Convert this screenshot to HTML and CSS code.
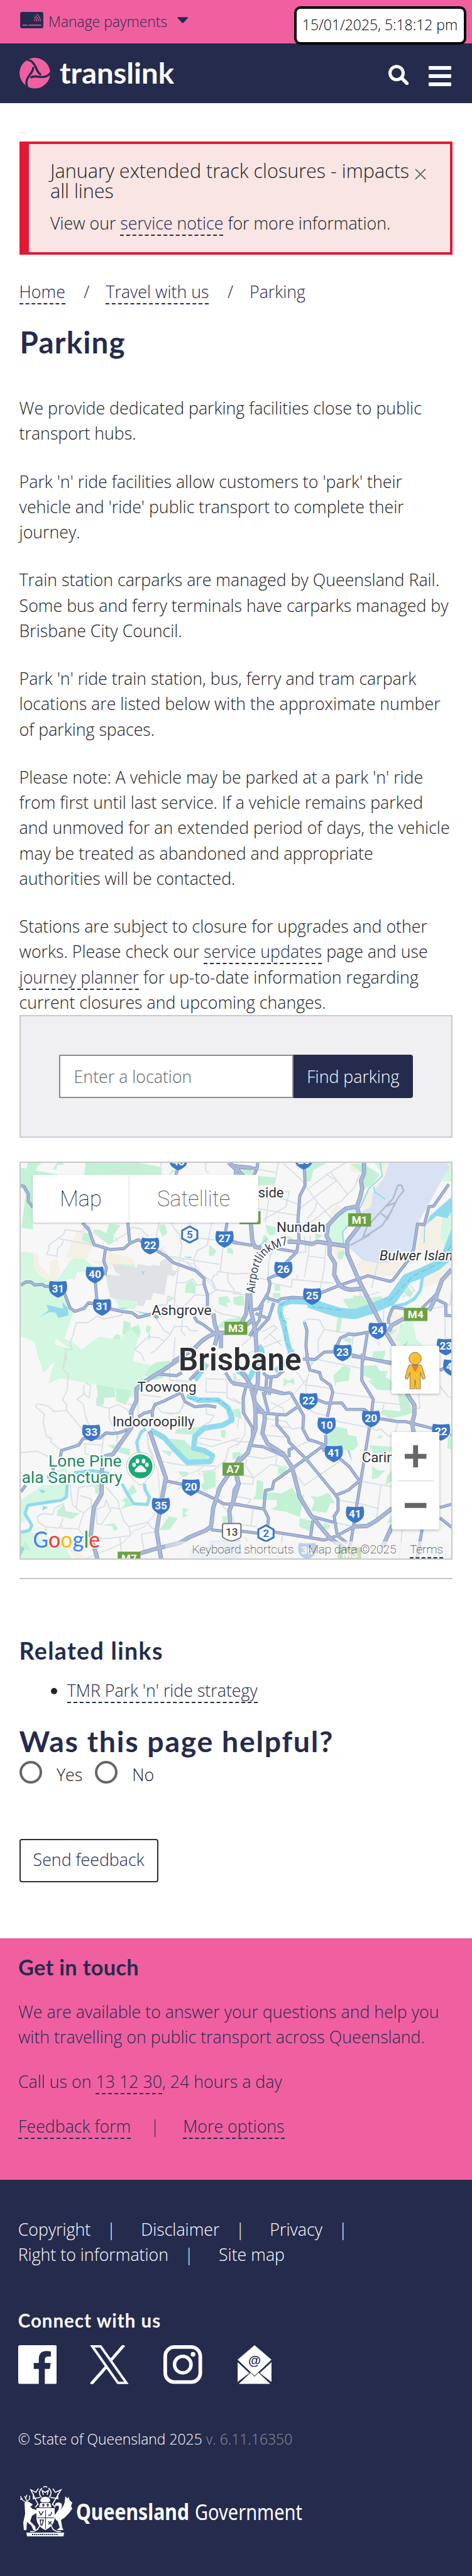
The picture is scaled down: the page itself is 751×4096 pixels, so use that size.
FILE: index.html
```html
<!DOCTYPE html>
<html lang="en">
<head>
<meta charset="utf-8">
<title>Parking | Translink</title>
<link rel="stylesheet" href="styles.css">
</head>
<body>
<div class="topbar">
  <a class="payments">
    <svg class="card-icon" viewBox="0 0 58 41"><rect width="58" height="41" rx="5" fill="#252b4d"/><path d="M6 33h12M21 33h32" stroke="#f060a1" stroke-width="2.4"/><path d="M35 19q2 2 3 4.500M35 13q6 4 7 10.500M37.500 9.500q8 4.500 9 14M41 6q9 5 10 17.500" fill="none" stroke="#f060a1" stroke-width="1.700"/></svg>
    <span>Manage payments</span>
    <svg class="caret" viewBox="0 0 18 10"><path d="M1.500 0h15q2 0 .8 1.700l-6.800 7.500q-1.500 1.300-3 0L.7 1.700Q-.5 0 1.500 0Z" fill="#252b4d"/></svg>
  </a>
  <div class="clock">15/01/2025, 5:18:12 pm</div>
</div>
<header class="header">
  <svg class="logo" viewBox="0 0 250 52">
    <defs><clipPath id="disc"><circle cx="24.500" cy="25.300" r="24.500"/></clipPath></defs>
    <g clip-path="url(#disc)"><circle cx="24.500" cy="25.300" r="24.500" fill="#f060a1"/>
      <g fill="none" stroke="#252b4d" stroke-width="3.400">
        <path id="gap" d="M52 21.500C46 32 38 32 30 31C24 30 21 30 17.500 32.500"/>
        <use href="#gap" transform="rotate(120 24.500 25.300)"/><use href="#gap" transform="rotate(240 24.500 25.300)"/>
      </g></g>
    <text x="64" y="42.300" class="wordmark" textLength="182" lengthAdjust="spacingAndGlyphs">translink</text>
  </svg>
  <div class="header-actions">
    <svg class="search-icon" viewBox="0 0 32 32"><circle cx="13" cy="13.200" r="10.500" fill="none" stroke="#fff" stroke-width="5"/><path d="M21 21l8.500 8.500" stroke="#fff" stroke-width="5.500" stroke-linecap="round"/></svg>
    <div class="menu"><i></i><i></i><i></i></div>
  </div>
</header>

<main class="main">
  <section class="alert">
    <div class="alert-body">
      <h2 class="alert-title">January extended track closures - impacts all lines</h2>
      <p class="alert-text">View our <a class="link">service notice</a> for more information.</p>
    </div>
    <svg class="close" viewBox="0 0 18 20"><path d="M1 4l16 16M17 4L1 20" stroke="#fff" stroke-width="1.800"/><path d="M1 1l16 16M17 1L1 17" stroke="#6a6567" stroke-width="1.800"/></svg>
  </section>

  <nav class="crumbs"><a class="link">Home</a><span class="sep">/</span><a class="link">Travel with us</a><span class="sep">/</span><span>Parking</span></nav>
  <h1 class="title">Parking</h1>

  <div class="copy">
    <p>We provide dedicated parking facilities close to public<br>transport hubs.</p>
    <p>Park 'n' ride facilities allow customers to 'park' their<br>vehicle and 'ride' public transport to complete their<br>journey.</p>
    <p>Train station carparks are managed by Queensland Rail.<br>Some bus and ferry terminals have carparks managed by<br>Brisbane City Council.</p>
    <p>Park 'n' ride train station, bus, ferry and tram carpark<br>locations are listed below with the approximate number<br>of parking spaces.</p>
    <p>Please note: A vehicle may be parked at a park 'n' ride<br>from first until last service. If a vehicle remains parked<br>and unmoved for an extended period of days, the vehicle<br>may be treated as abandoned and appropriate<br>authorities will be contacted.</p>
    <p>Stations are subject to closure for upgrades and other<br>works. Please check our <a class="link">service updates</a> page and use<br><a class="link">journey planner</a> for up-to-date information regarding<br>current closures and upcoming changes.</p>
  </div>

  <form class="finder"><span class="field">Enter a location</span><span class="find">Find parking</span></form>

  <div class="map">
    <svg class="map-art" viewBox="50.800 2904 1077 988" preserveAspectRatio="none">
      <defs>
        <path id="sh" d="M-20-1Q0 2 20-1Q24 8 22 22Q18 34 0 41Q-18 34-22 22Q-24 8-20-1Z" fill="#3a77c8"/>
        <path id="hex" d="M0-20L19-10V10L0 20L-19 10V-10Z" fill="#fff" stroke="#3a77c8" stroke-width="3"/>
        <g id="major">
          <g transform="translate(0 2880) scale(.38265 .33333)">
            <path d="M1490 70L1540 120 1536 165M1545 100L1640 110M1540 110L1600 190"/>
            <path d="M1640 1250C1560 1350 1500 1350 1420 1345C1340 1370 1300 1420 1265 1465L1125 1565"/>
            <path d="M1390 1200L1400 1280 1420 1345 1400 1440M1440 1350V1460"/>
          </g>
          <g transform="translate(580 2880) scale(.38202 .33333)">
            <path d="M860 70V150L840 205L848 265L832 340L815 395L825 450V550L750 660V750L830 960L980 1300L1060 1450"/>
            <path d="M815 400L740 415 690 460 625 540 615 620 635 660V760L670 825L665 910L700 990Q730 1020 780 1022L845 1015M360 663L440 665L520 680L555 663L750 697M120 530L130 660L150 705L190 708"/>
            <path d="M1285 1180L1330 1080L1370 950L1434 870M1120 1240L1040 1290L1020 1335M115 1050L120 1170L150 1340L162 1570M100 1050L90 1200L60 1270"/>
          </g>
          <g transform="translate(0 3380) scale(.38265 .3699)">
            <path d="M1180 30L1060 115L950 185L888 240V320L855 390V500L795 590L735 680L665 700L660 950L610 1040L590 1230L635 1390"/>
            <path d="M1568 700L1435 900L1390 1040L1375 1170L1340 1195L1235 1240L1170 1280L1010 1320L915 1350M1540 830L1555 880L1530 920L1520 1000L1495 1060L1500 1145M975 525L1080 840L1055 980L1020 1200L1050 1390"/>
          </g>
          <g transform="translate(580 3380) scale(.38202 .3699)">
            <path d="M60 120L120 220L145 330L210 410V450L195 540L230 610L330 675L390 770L440 970L510 1090L640 1250L740 1320"/>
            <path d="M168 110L165 200L140 290L150 380V510L100 670L15 760L40 880L5 1000M1140 270L1190 350V410L1175 470L1185 540M790 1170L880 1165L940 1130L1045 1045M1045 1160L980 1310M0 200L90 215L330 270"/>
          </g>
        </g>
        <g id="arterial">
          <g transform="translate(0 2880) scale(.38265 .33333)">
            <path d="M133 240L155 250L182 305V360L212 405M535 520L580 580L612 685L720 722L805 715L845 675L900 648L1080 770L1130 820L1275 880L1330 940V985L1352 1060V1150M832 520L845 675M685 722L675 810L692 860L682 915M1155 125L1145 165M1480 520L1468 600M1510 660L1580 680M133 990L165 965H200L222 987L275 983L290 997H330M415 1040L455 1160L487 1185L547 1162L575 1120L620 1130M620 970L630 1100M715 1165L790 1185L860 1195L900 1230L990 1205L1030 1235M1265 1225L1285 1260L1320 1280L1400 1350"/>
          </g>
          <g transform="translate(580 2880) scale(.38202 .33333)">
            <path d="M0 90L160 115L165 72M160 115L140 165M470 120L475 240L440 320L428 500L435 640L420 740L345 825M0 668L130 690M290 715L420 740M330 910L280 915L235 938L245 980L235 1040L215 1080L170 1165L130 1175M215 1080L295 1110L320 1090L390 1080L470 1085M570 1050L700 990L885 918L1030 960L1050 950L1150 800L1185 720L1210 530L1255 535L1285 400L1315 397L1415 232"/>
            <path d="M270 1120L235 1240L130 1370M195 1130L175 1250L110 1370M150 1200L235 1240M470 1265L487 1330L480 1440L490 1540L540 1545L600 1490L665 1488L705 1385L760 1355L800 1360L890 1340M882 1350L852 1560M780 1520L1040 1568M1120 1165L1060 1155L1045 1165L1020 1240V1280M1240 1160L1330 1060M1335 1095L1395 1130V1215L1434 1218"/>
          </g>
          <g transform="translate(0 3380) scale(.38265 .3699)">
            <path d="M1035 140L1150 150L1185 130M1310 100L1235 180M900 430L935 405L990 390L1010 345L1060 325L1180 265L1205 325L1270 360L1350 352L1410 362M992 390V430M830 510Q780 550 690 537L650 570L540 575L510 620L400 655L390 700M305 835L350 830L340 750M133 935L165 890M1080 860L1190 885M1290 930L1415 990L1460 1015L1568 1022M1375 1190L1450 1200M1470 130L1510 195L1568 210"/>
          </g>
          <g transform="translate(580 3380) scale(.38202 .3699)">
            <path d="M90 215L70 300V400L130 500V570M460 40L485 35L505 110L570 130L580 170L640 215L655 260L620 430M610 550V610L480 710L270 865L260 915L215 925L205 1050L235 1110L230 1170M485 40L490 0M550 310L610 335H715L745 377L860 378L885 395M960 440L1080 460H1130L1305 505M1425 550H1434M850 0L845 180L920 310L910 395M895 500L790 1170L770 1300M150 390L220 405L350 415L440 350M380 265L465 420L460 510L495 580L585 610L600 665M380 265L330 272L240 240L170 235M200 260L235 400M225 140L215 280M255 150L240 280M200 130L230 160L290 155L335 115M290 410V480L365 570L370 600L480 710L670 950L690 980V1060L665 1100L685 1230M110 620L200 630L330 690M395 640L370 650V700M700 710L760 760L830 860L755 925L680 955M0 1015L205 1050M515 1100L660 1140M525 1130L510 1240M60 1200L170 1215M270 1205L600 1260L685 1230L790 1170M685 1230L750 1280M780 10L1040 70M1356 1040L1434 1018M1356 1110L1434 1175M1240 1190L1205 1390M1356 115L1390 95"/>
          </g>
        </g>
        <path id="link-m7" d="M635 3230C640 3180 645 3150 668 3130Q690 3113 726 3107"/>
      </defs>
      <rect x="40" y="2890" width="1100" height="1010" fill="#f7f7f7"/>

      <g transform="translate(0 2880) scale(.38265 .33333)">
        <path class="park" d="M179 72H268L240 100 232 130 356 155 400 165 212 162V570L138 558 165 310 133 240V110L172 114ZM370 72H412L410 88 372 85 365 126 340 118ZM557 72H895L1040 100 1048 165H545ZM1130 120L1145 130 1105 165 1110 140ZM710 528L785 538 740 610V655L705 682 660 630 600 575 640 570 690 600ZM540 595L585 600 610 685 530 655ZM1040 535H1075L1090 600 1060 625 1035 570ZM1365 685L1410 735 1390 768H1362ZM1485 700L1518 720V757L1480 745ZM1245 950L1275 985V1052L1205 1045 1210 985ZM1095 1090L1140 1078 1100 1118ZM1425 1078L1480 1070 1505 1115 1475 1120 1485 1155 1425 1130Z"/>
        <path class="park" d="M1520 1080L1590 1070V1140L1540 1140ZM1440 1270Q1480 1230 1600 1230V1290L1415 1310ZM805 1255L850 1270V1310L900 1285 917 1330 905 1380 795 1360ZM955 1285L987 1305 965 1350 950 1335ZM755 1355L788 1365 780 1400 733 1392Z"/>
        <path class="wood" d="M133 735L220 748 218 860 260 920 330 960 370 945 465 795 520 770 600 840 690 860 640 890 500 890 485 950 468 940 370 965 330 990 420 1050 480 1180 450 1280 418 1390 470 1410 530 1470 645 1375 780 1400 850 1310 900 1370 862 1565H257L220 1410 133 1370ZM745 845L780 828H880V858L790 870 740 880 795 925ZM690 960L720 1080 890 1120 880 1170 780 1160Z"/>
        <path class="land" d="M360 1388L460 1468 358 1432Z"/>
        <path class="sand" d="M495 590L540 560 530 650 605 690 560 795 428 778ZM705 740L870 790 880 828 780 830 720 865 580 810 690 800ZM220 748L252 755 248 825 325 925 320 810 370 785 390 880 368 950 320 955 255 915 218 860Z"/>
        <path class="grey" d="M730 825L890 858 895 830 985 847 990 835 1040 845 1045 810 1090 785 1120 800V875L1155 885 1135 922 1092 912 1070 1062 998 1045 985 1100 950 1098 935 1145 890 1140 893 1115 720 1085 685 905 790 920 745 875Z"/>
        <path class="water" d="M300 1135L410 1165 405 1115 440 1160 445 1215 380 1233 358 1192 320 1190 255 1228 315 1178ZM922 885H943L933 915ZM1195 775H1252L1235 788ZM760 1158H835L800 1170ZM870 1178L965 1200 950 1210ZM970 1340L977 1370 968 1410ZM560 525L590 560 580 570Z"/>
      </g>
      <g transform="translate(580 2880) scale(.38202 .33333)">
        <path class="air" d="M1025 72H1400L1422 110 1355 230 1280 390 1210 530 1180 740 1010 820 850 800 765 695 750 690 830 550V450L900 400 920 290 985 190Z"/>
        <path class="sand" d="M770 80L830 70 840 150 765 135ZM975 72H1025L990 190 920 290 905 400 860 430 830 340 890 270 980 180ZM680 385L720 410 640 480 620 540 650 430ZM640 645L740 690 700 820 660 750ZM820 795L950 820 1090 810 1100 870 1040 920 880 910 805 870ZM1300 470L1360 490V620L1390 690 1434 640V940L1240 1010 1230 900 1380 830 1310 770 1200 730 1210 540 1260 520ZM1040 1175L1120 1220 1060 1400 1120 1440 1030 1430 1000 1360 1035 1240Z"/>
        <path class="park" d="M520 72H620L530 125 510 212H480L482 110ZM770 80H860L965 160 905 240 860 270 840 205 850 150ZM55 115L145 125 130 160H80ZM165 170L277 180 275 235 165 240ZM215 535L280 555V610L245 615 225 590ZM205 610L230 625 225 675 190 665ZM540 595L595 620 540 648ZM330 605L400 640 380 655ZM690 745L725 725 735 750 715 800 688 790ZM275 985H312V1030H273ZM265 1045L315 1048 310 1085 263 1075ZM5 1080L60 1065 50 1140 8 1130ZM790 1065L870 1070 860 1095 975 1070 985 1100 800 1175 765 1165 725 1110 730 1090 788 1085ZM685 1235H717L700 1338H677ZM1140 990L1180 1045 1165 1085 1115 1040ZM1100 1280L1170 1270 1160 1320 1090 1330ZM1025 1325L1075 1320 1030 1370ZM740 1370L780 1395 775 1428 720 1400ZM920 1485L1003 1480 985 1545 915 1530Z"/>
        <path class="wood" d="M1400 72H1434V215L1360 205 1422 110ZM735 420L810 410 822 450 757 455V545L725 590 730 690 640 650 620 550 690 460ZM880 280L900 270 840 410 870 430ZM860 330L875 380 860 430 835 400ZM1434 400V640L1390 690 1360 640 1370 470ZM1130 1250L1180 1265 1200 1390 1250 1445H1120L1060 1400ZM925 72H1005L965 130Z"/>
        <path class="water" d="M1434 325V430L1405 487 1335 470 1270 530 1290 470ZM1434 560V760L1395 790 1370 750ZM1260 540L1257 670 1205 690 1250 670 1253 545ZM1120 1440L1152 1400 1130 1445Z"/>
      </g>
      <g transform="translate(0 3380) scale(.38265 .3699)">
        <path class="wood" d="M240 0H875L862 52 1020 90 945 150 940 190 880 300 700 235 630 210 390 168 312 205 352 55 282 130ZM133 990L280 890 445 885 425 970 180 1025 160 1080 170 1130 133 1145ZM133 1210H220L290 1290 400 1290 470 1385H133ZM370 790L430 770 440 800 370 800Z"/>
        <path class="park" d="M625 210L745 232 750 295 680 300 672 350 632 348 635 260ZM755 232L852 250 845 290 820 348 755 320ZM1015 60L1105 50 1060 165 1010 180 940 145 970 95ZM1100 575L1200 585 1250 640 1330 658 1370 730 1230 735 1150 640ZM1150 510L1310 495 1270 550 1140 540ZM700 620L780 615 790 635 845 645V690L770 665ZM1050 655L1125 660 1105 695ZM865 885L893 935 840 965 832 925ZM825 970L850 1010 870 1025 785 1050 820 1010 790 990ZM1160 795L1230 800 1215 835 1175 820ZM1320 805L1405 795V900L1325 930 1310 890 1330 870ZM370 1065L410 1020 425 1070 520 1078 470 1118 368 1095ZM665 1160L745 1145 770 1185 740 1200 730 1165ZM1100 1100L1158 1112 1105 1190 1035 1195ZM1190 1040L1233 1055 1200 1080 1225 1095 1190 1110ZM1440 515L1473 520 1465 575 1440 560ZM620 885L655 890 640 955 618 940ZM1465 10L1520 20 1500 60ZM1520 670L1568 665V720ZM160 1265L200 1330 133 1330ZM1450 1100H1480V1140H1450Z"/>
        <path class="sand" d="M1470 360L1510 450 1480 440ZM430 1290L570 1385H490Z"/>
        <path class="water" d="M250 915L297 930 272 945ZM280 1030L313 1040 272 1060ZM133 1300L158 1315 133 1370ZM1155 925L1185 890 1175 910Z"/>
        <path class="air" d="M1370 1265L1568 1260V1385H1230L1240 1320 1340 1330Z"/>
      </g>
      <g transform="translate(580 3380) scale(.38202 .3699)">
        <path class="park" d="M730 80L772 97 760 185 680 195 675 230 658 150ZM860 85L940 78 965 120 1015 118 1000 160 1042 185V250L945 245 885 185 920 180 860 150ZM335 165L365 185 403 165V208L365 195 335 225ZM1080 270L1145 285 1180 400 1120 420 1030 440 965 400 990 380 1100 390ZM675 495L748 508 755 550 810 560 822 620 790 655 720 650 620 615 625 550ZM895 620L1042 630V660L920 680ZM915 760L950 790 1000 790 950 840 910 850ZM940 575L965 548 985 568ZM1000 890L1010 830 1042 790V860ZM160 852L202 865 200 935 320 945 390 908 435 970 470 950 440 1105 350 1070 252 1052 290 1030V990L130 985 150 960ZM510 960L560 970 625 940 670 1010 640 1010 615 1075 515 1062 535 1000ZM440 1110L515 1130 505 1200 435 1170ZM600 1140L642 1160 625 1190 593 1175ZM300 768L355 775 340 825 295 810ZM0 670L70 680 50 720 0 715ZM5 380L45 370 60 440 20 430ZM1410 565H1434V650L1405 640ZM1010 1150L1042 1090V1140ZM505 40L555 25 515 90ZM0 120L30 160 10 200Z"/>
        <path class="water" d="M750 652L765 655 782 728 770 705ZM1042 1165L1045 1215 1035 1215ZM0 380Q25 430 0 480Z"/>
      </g>

      <g class="minor">
        <g transform="translate(0 2880) scale(.38265 .33333)"><path d="M585 72L610 120 605 162M895 85L840 120 740 135 700 165M1048 72V160M1340 72V130L1360 150M545 590L550 520M540 590L420 573 415 605 315 690 320 710 302 757 370 772 373 715 400 690 412 650M385 640L615 690M605 590L710 680 825 600 860 555 920 568 965 630M1035 520L1015 640M1120 520V540L1170 610 1185 700 1165 830 1135 1100M1240 520L1250 630M1380 520L1350 690 1285 730 1262 800 1278 880M1250 630L1400 650M1090 770L1430 832M1440 650L1455 690 1435 885M1150 970H1205L1255 942 1285 990 1330 980M1420 885L1540 905M1420 885L1415 910 1395 915 1380 950 1410 1020M1485 900V960L1530 1030M1205 1140L1270 1060 1350 1068 1410 1025 1568 1045M1030 1135L1085 1140 1095 1070 1140 1090 1130 1200M1390 1175L1450 1205 1568 1230M635 1220L570 1270H495L475 1360 455 1420 470 1468 425 1470 430 1560M635 1220L670 1243 790 1215 800 1180M1015 1235L1070 1330 1110 1355 1140 1290M1110 1360L1060 1420 1010 1480 980 1500M1140 1300L1215 1297 1240 1330 1290 1330M1140 1380L1130 1560M875 1472L960 1378 1030 1380 1070 1410M875 1472L920 1500 940 1560M1200 1145L1180 1330 1210 1370M1170 780L1380 960 1400 1020"/></g>
        <g transform="translate(580 2880) scale(.38202 .33333)"><path d="M330 75L450 200 550 360 650 490M300 72L265 280 370 290 350 400 200 500M165 120L280 145M165 415L420 465M300 330L435 385M240 320L215 520M500 260L640 140 740 72M570 300L680 205M440 415L570 300M640 140L750 305M680 205L610 155M830 160L800 250 710 360 655 390 510 520M550 370L540 420 490 490M470 620L480 740 430 745M495 770L600 785M510 620L495 770 470 930M615 620L600 860 575 1010M240 920V970L385 1005 390 945 580 965 660 975M425 910L420 950M180 935L260 960M0 905L130 900M0 1050L80 1060M275 720Q225 780 235 920M250 1100L290 1070M300 1240L370 1240M460 1260L500 1240 570 1250 600 1320 700 1340 890 1345M600 1320L560 1400 560 1500M790 1360L775 1520M960 1350L955 1440M990 1150L985 1290M1110 1080L1190 1030 1150 970M830 1020L840 1080 960 1040M910 1010L930 910M950 820L930 920M765 700L850 795 950 820 1010 815M1390 1215V1400M1434 1028L1420 1150M1290 1170L1434 1130M195 1340L270 1290 290 1310 200 1400M60 1440L200 1300M100 1500L320 1400M240 1350L320 1440"/></g>
        <g transform="translate(0 3380) scale(.38265 .3699)"><path d="M425 0L410 110 443 140 435 250 405 315 433 345V385L350 392 313 355 242 340 230 360 287 410 280 470 300 560 335 575 330 600 400 655M433 385L485 450 540 520 600 570M555 200L590 215 580 300 545 275V215M555 265L500 310 540 340 560 440 600 530M630 300V350L710 370 770 345 830 380 850 430M710 370V440L770 570M133 670L240 660 350 715M660 620L550 610 555 680 640 700M675 540L660 680M760 560L765 620 720 690M895 210L900 430M920 280L1050 295M830 340L870 350M1015 350L1050 395 1115 410 1170 400 1200 325M1105 50V180L1235 190M960 530L965 620 1000 700M1050 730L1190 755 1410 760M1345 360V410L1395 420 1370 460 1290 510 1280 600 1380 630 1440 610 1560 570M1300 570L1440 590M1345 180L1340 260 1480 265M1335 170L1568 180M1480 190V300L1568 340M455 885L470 1020 510 1060 545 1075 510 1180M510 900L495 1050M515 905L610 890 640 940M520 960L590 980 595 1030 545 1075M465 1075L425 1070 410 1015 355 1045 340 1090 280 1080 240 1100 245 1140 295 1170 385 1180 410 1110M295 1170V1240M400 1160L400 1180 510 1185 540 1225M625 1040L630 1150 660 1155 720 1060 690 990 680 1030 625 1055M720 1040L780 1050 805 1130 840 1170 960 1140 990 1180 1020 1190M690 900L770 1000 775 1050M840 1170L850 1230 700 1250 580 1245M920 1220L1010 1205M920 1220L940 1350M780 1245L790 1340M1470 720L1390 790 1310 800M1568 600L1490 640 1460 760M1410 900V990L1480 1060M1200 350L1160 405 1060 400"/></g>
        <g transform="translate(580 3380) scale(.38202 .3699)"><path d="M550 40L840 100M470 210L640 235M660 265L920 300M920 325L1150 350M490 160L480 240 500 370 530 400 620 420M640 430L690 460 900 500 940 520 970 510 1020 560 1060 550M990 340L980 400M1080 470L1060 550M220 440L350 460 380 500 250 490M200 550L350 565M380 510L460 500M400 640L480 600 560 590M290 700L280 760M80 690L200 710 290 690M90 710L85 760 140 840 250 750 360 770M0 800L140 840 130 885 40 875M700 730L470 890 400 800M820 860L1042 900M970 890L940 1130M690 990L860 1020 960 1050M660 1140L800 1170M0 960L120 985 100 1015M135 1045L120 1160M0 1100L10 1150 160 1170M330 1215L315 1300M250 330L330 370 335 410M0 590L110 600M360 30L470 200M1210 190L1225 370 1190 370M1356 220L1410 290 1434 300M1110 1190L1090 1390M0 1340L440 1385M0 300L60 340 70 390M30 500L50 400"/></g>
      </g>
      <g class="rail">
        <g transform="translate(0 2880) scale(.38265 .33333)"><path d="M1020 700L1080 740 1095 780 1265 830 1400 1020 1568 1045M750 630L770 665M645 620L665 650M950 620L970 610M1070 700L1040 740"/></g>
        <g transform="translate(0 3380) scale(.38265 .3699)"><path d="M955 540L965 640 1030 800 1040 940 1030 1060 940 1170 870 1200 800 1280 690 1330 560 1385M1040 940L1190 830 1290 790 1310 830M1290 790L1330 760"/></g>
        <g transform="translate(580 3380) scale(.38202 .3699)"><path d="M520 50L490 170 370 310 250 380 130 370M85 350L80 550 20 640M80 1240L130 1320"/></g>
      </g>
      <g class="runway"><g transform="translate(580 2880) scale(.38202 .33333)"><path d="M770 690L850 640 880 550 1000 400 1050 340 1082 240H1105L1120 280 1085 330 1030 450 980 540 860 630M1000 400L1065 370 1010 500M970 450L1010 485M850 640L900 610"/></g></g>

      <g class="river">
        <g transform="translate(580 2880) scale(.38202 .33333)"><path class="r-wide" d="M1440 740L1330 845 1230 900 1140 940 1090 1020 1040 1100 900 1170 800 1205 700 1195 600 1160 500 1120"/><path class="r-mid" d="M560 1140L480 1115 380 1110 315 1135 310 1190 340 1310 360 1420 395 1540"/><path class="r-thin" d="M1245 910L1228 1030 1190 1090 1130 1130 1040 1150"/><path class="r-hair" d="M965 72L980 170 890 265 835 410M925 250L930 290 1000 345M755 540L720 590 727 690M230 640L175 695M235 1060V1120"/></g>
        <g transform="translate(580 3380) scale(.38202 .3699)"><path class="r-mid" d="M170 -50Q200 -30 190 20L140 110 110 170 40 120 20 80M390 -30L360 50 280 120"/></g>
        <g transform="translate(0 3380) scale(.38265 .3699)"><path class="r-mid" d="M1350 70L1270 180M1220 285L1290 315 1420 315 1490 370 1512 450 1450 485 1330 505 1270 560 1262 640 1330 655 1385 690 1370 730 1220 735 1130 640 1070 570 980 515"/><path class="r-thin" d="M950 510L920 530 890 600 905 680M940 880L945 920 972 970 960 1020 870 1015 830 950 795 880M710 810L600 792 480 805M437 885L430 970 400 990 180 1025 160 1080 205 1160 190 1195 130 1208"/></g>
      </g>
      <g class="ferry"><g transform="translate(580 2880) scale(.38202 .33333)"><path d="M1430 690L1360 820 1180 920 1030 1100 1000 1090M710 1175L520 1150M310 1140L370 1100M315 1190L320 1250 350 1260 345 1400 385 1490"/></g><g transform="translate(0 3380) scale(.38265 .3699)"><path d="M1230 300L1290 320 1310 308 1430 318 1480 350 1495 385"/></g></g>

      <use href="#arterial" class="art-case"/><use href="#major" class="maj-case"/>
      <use href="#arterial" class="art-fill"/><use href="#major" class="maj-fill"/>

      <g class="shields">
        <g transform="translate(444.700 2882)"><use href="#sh"/><text y="28">40</text></g>
        <g transform="translate(374 3092)"><use href="#sh"/><text y="27">22</text></g>
        <g transform="translate(560 3075)"><use href="#sh"/><text y="27">27</text></g>
        <g transform="translate(236 3164)"><use href="#sh"/><text y="27">40</text></g>
        <g transform="translate(144 3200)"><use href="#sh"/><text y="27">31</text></g>
        <g transform="translate(254 3245)"><use href="#sh"/><text y="27">31</text></g>
        <g transform="translate(758 2880)"><use href="#sh"/><text y="27">20</text></g>
        <g transform="translate(707 3152)"><use href="#sh"/><text y="27">26</text></g>
        <g transform="translate(779 3218)"><use href="#sh"/><text y="27">25</text></g>
        <g transform="translate(942.500 3304)"><use href="#sh"/><text y="27">24</text></g>
        <g transform="translate(855 3359)"><use href="#sh"/><text y="27">23</text></g>
        <g transform="translate(1113 3344)"><use href="#sh"/><text y="27">23</text></g>
        <g transform="translate(1129 3396)"><use href="#sh"/><text y="27">41</text></g>
        <g transform="translate(770 3480)"><use href="#sh"/><text y="27">22</text></g>
        <g transform="translate(815 3541)"><use href="#sh"/><text y="27">10</text></g>
        <g transform="translate(926 3524)"><use href="#sh"/><text y="27">20</text></g>
        <g transform="translate(1101 3557)"><use href="#sh"/><text y="27">22</text></g>
        <g transform="translate(833 3611)"><use href="#sh"/><text y="27">41</text></g>
        <g transform="translate(886 3763)"><use href="#sh"/><text y="27">41</text></g>
        <g transform="translate(766.500 3854)"><use href="#sh"/><text y="27">36</text></g>
        <g transform="translate(227 3559)"><use href="#sh"/><text y="27">33</text></g>
        <g transform="translate(476 3695)"><use href="#sh"/><text y="27">20</text></g>
        <g transform="translate(401 3742)"><use href="#sh"/><text y="27">35</text></g>
        <g transform="translate(473 3083)"><use href="#hex"/><text y="9" class="blue">5</text></g>
        <g transform="translate(663.500 3829.500)"><use href="#hex"/><text y="9" class="blue">2</text></g>
        <g transform="translate(578 3803)"><path d="M-19 2H19Q23 2 23 7V34Q23 39 0 46Q-23 39-23 34V7Q-23 2-19 2Z" fill="#fff" stroke="#757575" stroke-width="2"/><text y="32" class="plain">13</text></g>
        <g fill="#6ca144"><path d="M560 3301h57v32.500h-57zM869 3030h57v33h-57zM1008 3266h59v33h-59zM555 3653h53v32.600h-53zM293 3875h57v33h-57zM843.500 3864h58.500v33h-58.500zM597.500 3024.700h52.500v32.300h-52.500z"/></g>
        <text x="588.500" y="3326">M3</text><text x="897.500" y="3056">M1</text><text x="1037.500" y="3292">M4</text><text x="581.500" y="3678">A7</text><text x="321.500" y="3901">M7</text><text x="873" y="3890">M3</text>
      </g>

      <g class="labels">
        <text x="377.700" y="3284" textLength="150" lengthAdjust="spacingAndGlyphs">Ashgrove</text>
        <text x="342" y="3475" textLength="148" lengthAdjust="spacingAndGlyphs">Toowong</text>
        <text x="280" y="3562" textLength="205" lengthAdjust="spacingAndGlyphs">Indooroopilly</text>
        <text x="690" y="3077" textLength="122" lengthAdjust="spacingAndGlyphs">Nundah</text>
        <text x="644" y="2990" textLength="64" lengthAdjust="spacingAndGlyphs">side</text>
        <text x="903" y="3651">Carina</text>
        <text x="947" y="3146.700" class="island">Bulwer Island</text>
        <text class="m7"><textPath href="#link-m7" textLength="164" lengthAdjust="spacingAndGlyphs">AirportlinkM7</textPath></text>
        <text x="445" y="3421.800" class="city" textLength="307" lengthAdjust="spacingAndGlyphs">Brisbane</text>
        <g class="poi"><text x="120" y="3662" textLength="183" lengthAdjust="spacingAndGlyphs">Lone Pine</text><text x="53" y="3703.700" textLength="252" lengthAdjust="spacingAndGlyphs">ala Sanctuary</text></g>
      </g>
      <g transform="translate(350 3662)">
        <path d="M0 46Q-6 45-10 40Q-35 18-35 0A35 35 0 0 1 35 0Q35 18 10 40Q6 45 0 46Z" fill="#fff" stroke="#b9c4bd" stroke-width="1"/><circle r="30" fill="#1aa974"/>
        <g fill="#fff"><ellipse cx="-16" cy="-4" rx="4.500" ry="5.500"/><ellipse cx="-7.500" cy="-13" rx="4.500" ry="6"/><ellipse cx="7.500" cy="-13" rx="4.500" ry="6"/><ellipse cx="16" cy="-4" rx="4.500" ry="5.500"/><path d="M0-3Q4-3 7 1L14 8Q17 14 9 14Q0 16-9 14Q-17 14-14 8L-7 1Q-4-3 0-3Z"/></g>
      </g>
      <text x="81" y="3866" class="google" textLength="168" lengthAdjust="spacingAndGlyphs"><tspan fill="#4285f4">G</tspan><tspan fill="#ea4335">o</tspan><tspan fill="#fbbc05">o</tspan><tspan fill="#4285f4">g</tspan><tspan fill="#34a853">l</tspan><tspan fill="#ea4335">e</tspan></text>
    </svg>
    <div class="map-types"><span class="type on">Map</span><span class="type">Satellite</span></div>
    <div class="pegman">
      <svg viewBox="0 0 52 96"><g fill="#fdbf2d" stroke="#6f6f6f" stroke-width="1.500"><path d="M15 35H37Q42 35 43 39L51 66Q51 71 46 71L44 69L39 54V96H28L26 72L24 96H13V54L8 69L6 71Q1 71 1 66L9 39Q10 35 15 35Z"/><circle cx="26" cy="19" r="15.500"/></g><path d="M17 36H36L26 53Z" fill="#e1802d"/></svg>
    </div>
    <div class="zoom"><svg viewBox="0 0 120 243"><path d="M60 33v55M33 60.500h54M33 183h54" stroke="#666" stroke-width="12.300"/><path d="M15 121.500h90" stroke="#e6e6e6" stroke-width="3"/></svg></div>
    <div class="credits"><span class="keys">Keyboard shortcuts</span><span class="data">Map data ©2025</span><a class="terms">Terms</a></div>
  </div>

  <hr class="rule">
  <h2 class="related">Related links</h2>
  <ul class="links"><li><a class="link">TMR Park 'n' ride strategy</a></li></ul>
  <h2 class="helpful">Was this page helpful?</h2>
  <div class="choices"><i class="radio"></i><span class="yes">Yes</span><i class="radio"></i><span class="no">No</span></div>
  <a class="send">Send feedback</a>
</main>

<section class="touch">
  <h2 class="touch-title">Get in touch</h2>
  <p>We are available to answer your questions and help you<br>with travelling on public transport across Queensland.</p>
  <p>Call us on <a class="link">13 12 30</a>, 24 hours a day</p>
  <p><a class="link">Feedback form</a><span class="bar">|</span><a class="link">More options</a></p>
</section>

<footer class="footer">
  <nav class="legal">
    <div><a>Copyright</a><span class="bar">|</span><a>Disclaimer</a><span class="bar">|</span><a>Privacy</a><span class="bar">|</span></div>
    <div><a>Right to information</a><span class="bar">|</span><a>Site map</a></div>
  </nav>
  <h3 class="connect">Connect with us</h3>
  <div class="social">
    <svg class="fb" viewBox="0 0 96 96"><path fill="#fff" d="M5 0H91Q96 0 96 5V91Q96 96 91 96H66V59H78.500L80.500 44H66V36Q66 28 74 28H81V15.500Q76 14.500 70 14.500Q51 14.500 51 34V44H38.500V59H51V96H5Q0 96 0 91V5Q0 0 5 0Z"/></svg>
    <svg class="x" viewBox="0 0 98 98"><path fill="none" stroke="#fff" stroke-width="6" d="M6 3H27L91 94H70Z"/><path d="M85 0L52 38M41 54L3 97" stroke="#fff" stroke-width="7.500"/></svg>
    <svg class="ig" viewBox="0 0 96 96"><rect x="4.500" y="4.500" width="87" height="87" rx="23" fill="none" stroke="#fff" stroke-width="9"/><circle cx="48" cy="48" r="20.500" fill="none" stroke="#fff" stroke-width="8.500"/><circle cx="73.500" cy="22.500" r="5.800" fill="#fff"/></svg>
    <svg class="mail" viewBox="0 0 84 96"><path fill="#fff" d="M42 0L84 36L42 76L0 36ZM0 42L29 69L0 91ZM84 42L55 69L84 91ZM3 96L32 68L42 78L52 68L81 96Z"/><text x="42" y="48" text-anchor="middle" class="at">@</text></svg>
  </div>
  <p class="copyright">© State of Queensland 2025 <span>v. 6.11.16350</span></p>
  <svg class="gov" viewBox="0 0 452 80">
    <g fill="#fff">
      <path d="M27 35H56V52Q54 64 41 70Q28 64 27 52Z"/>
      <path d="M11 74H71L70 80H12Z"/>
      <path d="M8 27Q12 23 16 26L21 29Q20 32 17 32L20 36L27 38V43L20 47L17 56L25 64L26 70H22L19 63L12 57L11 70H7L6 58L9 44Z"/>
      <path d="M2 16Q2 23 12 26M5 20L1 21M12 14Q8 20 13 26M16 15V21L12 24M8 16L10 20" fill="none" stroke="#fff" stroke-width="1.400"/>
      <path d="M57 28Q62 24 67 28Q69 34 64 39Q70 34 72 25L73 16L76 20L78 17L80 23L84 26L82 32L84 36L78 44Q73 50 66 54L68 66L70 70H59L64 66L61 56Q55 52 56 46L62 38Q64 32 61 31L56 32Z"/>
      <path d="M33 23Q34 17 41 17Q48 17 49 23L47 26H35ZM33 27H49L51 34H31Z"/>
      <path d="M30 30L18 6L26 10L30 4M52 30L66 6L57 10L53 4M22 12V20L33 18M61 12V20L49 18M35 18Q28 10 36 3M47 18Q54 10 46 3M38 14L36 7L41 10L46 7L44 14M38 2L41 0L44 2M30 28L25 34M52 28L57 34M28 70L33 62M54 70L50 62M17 72Q24 74 30 67M66 72Q58 74 52 67" fill="none" stroke="#fff" stroke-width="1.600"/>
    </g>
    <g stroke="#252b4d" fill="none"><path d="M28 50.500H55M41.500 38V68" stroke-width="1"/><path d="M31 40L34 46L38 40M46 46Q51 48 51 41M33 54H38L36 62H34ZM46 56L51 61M51 56L46 61M38 28V33M36 30H40M45 28V33M43 30H47" stroke-width="1.500"/><path d="M20 77H62" stroke-width="1.800" stroke-dasharray="2 1.200"/></g>
    <text x="90" y="53.500" class="gov-b" textLength="180" lengthAdjust="spacingAndGlyphs">Queensland</text>
    <text x="279" y="53.500" class="gov-r" textLength="171" lengthAdjust="spacingAndGlyphs">Government</text>
  </svg>
</footer>
</body>
</html>
```
FILE: styles.css
```css
* { box-sizing: border-box; }
html, body, h1, h2, h3, p, ul { margin: 0; padding: 0; }
body {
  width: 751px;
  height: 4096px;
  overflow: hidden;
  background: #fff;
  color: #222;
  font: 300 26.750px/40.130px "Open Sans", "Noto Sans", sans-serif;
}
h1, h2, h3 { font-family: Lato, "Open Sans", sans-serif; font-weight: 700; color: #252b4d; }
.link { color: #252b4d; border-bottom: 2px dashed #252b4d; }
svg { display: block; }

.topbar { position: relative; height: 68.800px; background: #f060a1; padding: 18.500px 31.600px 0; }
.payments { display: flex; color: #252b4d; font-size: 22.930px; line-height: 31px; }
.card-icon { width: 37px; height: 26px; margin-right: 8.500px; }
.caret { width: 17.500px; height: 10px; margin: 8px 0 0 16px; }
.clock {
  position: absolute; z-index: 2; left: 467.500px; top: 9.600px; width: 274px; height: 61px;
  border: 4px solid #000; border-radius: 10px; background: #fff; color: #000;
  font-size: 22.930px; line-height: 51px; text-align: center; white-space: nowrap;
}
.header { height: 95.500px; background: #252b4d; display: flex; justify-content: space-between; padding: 23px 33px 0 30.700px; }
.logo { width: 250px; height: 52px; margin-top: -.5px; }
.wordmark { font: 700 45px Lato, sans-serif; fill: #fff; }
.header-actions { display: flex; gap: 31.600px; padding-top: 11px; }
.search-icon { width: 32px; height: 32px; }
.menu { display: flex; flex-direction: column; gap: 6.600px; padding-top: 2.500px; width: 36.400px; }
.menu i { height: 6.200px; background: #fff; border-radius: 1px; }

.main { padding: 61.200px 30.600px 0; height: 2917.400px; }
.alert { display: flex; height: 179.700px; border: 4px solid #e31836; border-left-width: 15.300px; background: #f8e5e4; padding: 25.500px 38px 0 34.400px; justify-content: space-between; }
.alert-body { width: 575px; }
.alert-title { font: 300 30.570px/32.500px "Open Sans", sans-serif; color: #222; }
.alert-text { margin-top: 14.600px; }
.close { width: 18px; height: 20px; margin-top: 13px; flex: none; }
.crumbs { margin-top: 38.400px; color: #252b4d; height: 40.130px; white-space: nowrap; }
.sep { display: inline-block; margin: 0 26px 0 29.500px; }
.title { margin-top: 30.100px; font-size: 47.500px; line-height: 60px; letter-spacing: 1.200px; padding-left: 1px; }
.copy { margin-top: 55px; white-space: nowrap; }
.copy p + p { margin-top: 36.500px; }

.finder { height: 194.800px; border: 2px solid #c8c8d4; background: #f0f0f2; padding: 61.500px 61px 0 61.500px; display: flex; }
.field { width: 372.500px; height: 68.600px; border: 2px solid #8c8c8c; background: #fff; color: #666; padding: 12.500px 0 0 21.500px; }
.find { width: 190.500px; height: 68.600px; background: #252b4d; color: #fff; text-align: center; padding-top: 14.500px; border-radius: 0 4px 4px 0; }

.map { position: relative; margin-top: 38.400px; height: 633px; border: 2px solid #c9c9c9; overflow: hidden; }
.map-art { width: 100%; height: 100%; }
.map-art path, .map-art use { vector-effect: non-scaling-stroke; }
.park { fill: #c3f1d5; }
.wood { fill: #d3f7e1; }
.land { fill: #f7f7f7; }
.sand { fill: #f5f0e5; }
.grey { fill: #e1e2e6; }
.air { fill: #d9e2f5; }
.water { fill: #90daee; }
.minor, .rail, .runway, .river, .ferry, .art-case, .art-fill, .maj-case, .maj-fill { fill: none; stroke-linejoin: round; }
.minor { stroke: #d6dfe6; stroke-width: 1.800; }
.rail { stroke: #dfe1e4; stroke-width: 1.500; }
.runway { stroke: #aebbd0; stroke-width: 2.600; }
.river { stroke: #90daee; }
.r-wide { stroke-width: 16; }
.r-mid { stroke-width: 8.500; }
.r-thin { stroke-width: 5; }
.r-hair { stroke-width: 2; }
.ferry { stroke: #5cc6e0; stroke-width: 1.200; stroke-dasharray: 10 4; }
.art-case { stroke: #7f92c1; stroke-width: 4.800; }
.art-fill { stroke: #a8b8d8; stroke-width: 2.800; }
.maj-case { stroke: #8094c2; stroke-width: 6.600; }
.maj-fill { stroke: #a9b9d8; stroke-width: 4.800; }
.shields text { font: 700 27px Roboto, sans-serif; text-anchor: middle; fill: #fff; }
.shields text.plain { fill: #444; font-weight: 500; }
.shields text.blue { fill: #3a77c8; }
.labels text { font-family: Roboto, sans-serif; font-size: 35px; font-weight: 400; fill: #2f3135; stroke: #fff; stroke-width: 6; stroke-linejoin: round; paint-order: stroke; }
.labels text.island { font-style: italic; }
.labels text.m7 { font-size: 30px; fill: #35425a; }
.labels text.city { font-size: 77px; font-weight: 600; fill: #2d2f33; }
.labels .poi text { font-size: 41px; fill: #1c8a60; }
.google { font: 500 57px Lato, sans-serif; stroke: #fff; stroke-width: 4; paint-order: stroke; }
.map-types { position: absolute; left: 19px; top: 19px; width: 359px; height: 76.500px; display: flex; font-family: Roboto, sans-serif; font-weight: 100; font-size: 34.400px; line-height: 76px; text-align: center; }
.type { background: #fff; box-shadow: 0 1px 3px rgba(0,0,0,.25); width: 205px; color: #444; border-radius: 0 4px 4px 0; }
.type.on { width: 154px; color: #000; border-radius: 4px 0 0 4px; }
.pegman, .zoom { position: absolute; right: 19px; width: 76.500px; background: #fff; border-radius: 3px; box-shadow: 0 1px 4px rgba(0,0,0,.3); }
.pegman { top: 291px; height: 76.500px; padding: 8px 21.500px; }
.pegman svg { width: 33px; height: 61px; }
.zoom { top: 428.500px; height: 155px; }
.zoom svg { width: 76.500px; height: 155px; }
.credits { position: absolute; right: 0; bottom: 0; width: 455px; height: 27px; background: linear-gradient(90deg, rgba(245,245,245,.4), rgba(245,245,245,.7) 45px); font: 100 19.100px/26px Roboto, sans-serif; color: #000; display: flex; white-space: nowrap; padding-left: 42px; }
.keys { width: 185px; }
.data { width: 161.500px; }
.terms { border-bottom: 2px dashed #252b4d; height: 27px; }

.rule { border: 0; height: 2.400px; margin: 29px 0 0; background: #c8c8d4; }
.related { margin-top: 88.200px; font-size: 37.500px; line-height: 50px; letter-spacing: 1.350px; }
.links { margin: 18.200px 0 0 76.200px; }
.helpful { margin-top: 35px; font-size: 46.500px; line-height: 50px; letter-spacing: 1.700px; }
.choices { display: flex; margin-top: 7px; height: 42px; }
.radio { width: 36.400px; height: 36.400px; border: 4px solid #666; border-radius: 50%; }
.yes, .no { margin: 1.800px 19.500px 0 23px; }
.send { display: block; margin-top: 82px; width: 221px; height: 68.700px; border: 2px solid #252b4d; border-radius: 4px; color: #252b4d; text-align: center; padding-top: 11.500px; }

.touch { height: 384.200px; background: #f060a1; color: #252b4d; padding: 23.100px 29px 0; white-space: nowrap; }
.touch-title { font-size: 34.400px; line-height: 46px; margin-bottom: 28.200px; letter-spacing: .3px; }
.touch p { margin-bottom: 30.800px; }
.bar { display: inline-block; }
.touch .bar { margin: 0 37.500px 0 31px; }

.footer { height: 630.100px; background: #252b4d; color: #fff; padding: 59.200px 28.700px 0; white-space: nowrap; }
.legal .bar { margin: 0 40px 0 25.500px; }
.connect { margin-top: 64.300px; font-size: 29.500px; line-height: 40px; color: #fff; letter-spacing: 1px; }
.social { display: flex; margin-top: 19.400px; height: 61.600px; }
.fb, .ig { width: 61.600px; height: 61.600px; }
.x { width: 62.500px; height: 62.500px; margin: -.5px 55px 0 52.700px; }
.mail { width: 54px; height: 61.600px; margin-left: 56px; }
.at { font: 700 32px "Liberation Sans", sans-serif; fill: #252b4d; }
.copyright { margin-top: 70px; font-size: 22.930px; line-height: 34px; }
.copyright span { color: #8e8f99; }
.gov { width: 452px; height: 80px; margin: 58px 0 0 1.900px; }
.gov-b { font: 700 35px "Noto Sans", sans-serif; fill: #fff; }
.gov-r { font: 400 35px "Noto Sans", sans-serif; fill: #fff; }
```
